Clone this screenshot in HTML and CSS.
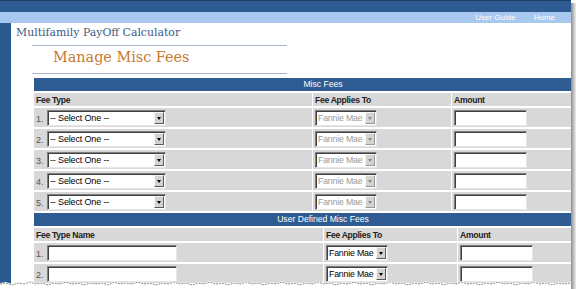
FILE: index.html
```html
<!DOCTYPE html>
<html>
<head>
<meta charset="utf-8">
<link rel="stylesheet" href="styles.css">
</head>
<body>
<div class="frame">
  <div class="page">
    <div class="topbar"></div>
    <div class="navbar"><a class="nav">User Guide</a><a class="nav">Home</a></div>
    <div class="main">
      <div class="sidebar"></div>
      <div class="content">
        <div class="apptitle">Multifamily PayOff Calculator</div>
        <div class="pagehead"><h1>Manage Misc Fees</h1></div>

        <div class="sect s1">
          <div class="bar">Misc Fees</div>
          <div class="cell hd">Fee Type</div><div class="cell hd">Fee Applies To</div><div class="cell hd">Amount</div>

          <div class="cell"><span class="num">1.</span><span class="selbox wide"><select><option>-- Select One --</option></select><span class="arr"></span></span></div>
          <div class="cell"><span class="selbox fm dis"><select disabled><option>Fannie Mae</option></select><span class="arr"></span></span></div>
          <div class="cell"><input class="amt" type="text"></div>

          <div class="cell"><span class="num">2.</span><span class="selbox wide"><select><option>-- Select One --</option></select><span class="arr"></span></span></div>
          <div class="cell"><span class="selbox fm dis"><select disabled><option>Fannie Mae</option></select><span class="arr"></span></span></div>
          <div class="cell"><input class="amt" type="text"></div>

          <div class="cell"><span class="num">3.</span><span class="selbox wide"><select><option>-- Select One --</option></select><span class="arr"></span></span></div>
          <div class="cell"><span class="selbox fm dis"><select disabled><option>Fannie Mae</option></select><span class="arr"></span></span></div>
          <div class="cell"><input class="amt" type="text"></div>

          <div class="cell"><span class="num">4.</span><span class="selbox wide"><select><option>-- Select One --</option></select><span class="arr"></span></span></div>
          <div class="cell"><span class="selbox fm dis"><select disabled><option>Fannie Mae</option></select><span class="arr"></span></span></div>
          <div class="cell"><input class="amt" type="text"></div>

          <div class="cell"><span class="num">5.</span><span class="selbox wide"><select><option>-- Select One --</option></select><span class="arr"></span></span></div>
          <div class="cell"><span class="selbox fm dis"><select disabled><option>Fannie Mae</option></select><span class="arr"></span></span></div>
          <div class="cell"><input class="amt" type="text"></div>
        </div>

        <div class="sect s2">
          <div class="bar">User Defined Misc Fees</div>
          <div class="cell hd">Fee Type Name</div><div class="cell hd">Fee Applies To</div><div class="cell hd">Amount</div>

          <div class="cell"><span class="num">1.</span><input class="name" type="text"></div>
          <div class="cell"><span class="selbox fm"><select><option>Fannie Mae</option></select><span class="arr"></span></span></div>
          <div class="cell"><input class="amt" type="text"></div>

          <div class="cell"><span class="num">2.</span><input class="name" type="text"></div>
          <div class="cell"><span class="selbox fm"><select><option>Fannie Mae</option></select><span class="arr"></span></span></div>
          <div class="cell"><input class="amt" type="text"></div>
        </div>
      </div>
    </div>
    <svg class="torn" width="571" height="8" viewBox="0 0 571 8" preserveAspectRatio="none">
      <polygon fill="#ffffff" points="0,2 6,1 12,3 18,1 24,2 30,0 36,2 42,1 48,3 54,1 60,2 66,0 72,2 78,1 84,3 90,1 96,2 102,1 108,3 114,0 120,2 126,1 132,2 138,0 144,2 150,1 156,3 162,1 168,2 174,0 180,2 186,1 192,3 198,1 204,2 210,0 216,2 222,1 228,3 234,1 240,2 246,0 252,2 258,1 264,3 270,1 276,2 282,0 288,2 294,1 300,3 306,1 312,2 318,0 324,2 330,1 336,3 342,1 348,2 354,0 360,2 366,1 372,3 378,1 384,2 390,0 396,2 402,1 408,3 414,1 420,2 426,0 432,2 438,1 444,3 450,1 456,2 462,0 468,2 474,1 480,3 486,1 492,2 498,0 504,2 510,1 516,3 522,1 528,2 534,0 540,2 546,1 552,3 558,1 564,2 571,1 571,8 0,8"/>
      <polyline fill="none" stroke="#8a8a8a" stroke-width="1" stroke-dasharray="2 1" points="0,3 6,2 12,4 18,2 24,3 30,1 36,3 42,2 48,4 54,2 60,3 66,1 72,3 78,2 84,4 90,2 96,3 102,2 108,4 114,1 120,3 126,2 132,3 138,1 144,3 150,2 156,4 162,2 168,3 174,1 180,3 186,2 192,4 198,2 204,3 210,1 216,3 222,2 228,4 234,2 240,3 246,1 252,3 258,2 264,4 270,2 276,3 282,1 288,3 294,2 300,4 306,2 312,3 318,1 324,3 330,2 336,4 342,2 348,3 354,1 360,3 366,2 372,4 378,2 384,3 390,1 396,3 402,2 408,4 414,2 420,3 426,1 432,3 438,2 444,4 450,2 456,3 462,1 468,3 474,2 480,4 486,2 492,3 498,1 504,3 510,2 516,4 522,2 528,3 534,1 540,3 546,2 552,4 558,2 564,3 571,2"/>
    </svg>
  </div>
  <div class="shadow"></div>
</div>
</body>
</html>
```

FILE: styles.css
```css
html, body {
  margin: 0;
  padding: 0;
  background: #ffffff;
}
.frame {
  width: 576px;
  height: 289px;
  overflow: hidden;
  display: flex;
}
.page {
  position: relative;
  width: 571px;
  height: 289px;
  overflow: hidden;
  background: #ffffff;
  display: flex;
  flex-direction: column;
}
.shadow {
  width: 5px;
  margin-top: 3px;
  background: linear-gradient(to right, #8c8c8c, #c8c8c8 60%, #ececec);
}
.topbar {
  height: 12px;
  flex: none;
  background: #2e5c92;
  border-top: 1px solid #1f3f68;
  box-sizing: border-box;
}
.navbar {
  height: 11px;
  flex: none;
  background: #a9c8f0;
  display: flex;
  justify-content: flex-end;
  align-items: center;
  gap: 18px;
  padding-right: 16px;
}
.nav {
  font-family: "Liberation Sans", Arial, sans-serif;
  font-size: 8px;
  color: #ffffff;
}
.main {
  flex: 1;
  display: flex;
}
.sidebar {
  width: 11px;
  flex: none;
  background: #2b5a90;
}
.content {
  flex: 1;
  padding-left: 5px;
  padding-top: 1px;
}
.apptitle {
  font-family: "DejaVu Serif", Georgia, serif;
  font-size: 10.9px;
  color: #3a5a84;
  height: 17px;
  line-height: 17px;
}
.pagehead {
  margin-left: 16px;
  width: 255px;
  border-top: 1px solid #a8b4c8;
  border-bottom: 1px solid #a8b4c8;
  margin-top: 4px;
  height: 29px;
  box-sizing: border-box;
  padding-bottom: 5px;
  display: flex;
  align-items: center;
}
.pagehead h1 {
  margin: 0 0 0 21px;
  font-family: "DejaVu Serif", Georgia, serif;
  font-weight: normal;
  font-size: 14.4px;
  color: #c77a33;
}
.sect {
  margin-left: 18px;
  width: 578px;
  display: grid;
  column-gap: 1px;
  row-gap: 2px;
  background: #ffffff;
}
.s1 {
  margin-top: 4px;
  grid-template-columns: 278px 138px 1fr;
}
.s2 {
  margin-top: 2px;
  grid-template-columns: 289px 133px 1fr;
}
.bar {
  grid-column: 1 / -1;
  height: 13px;
  background: #2e5c92;
  color: #ffffff;
  font-family: "Liberation Sans", Arial, sans-serif;
  font-size: 8.6px;
  line-height: 13px;
  text-align: center;
}
.cell {
  background: #d8d8d8;
  height: 19px;
  display: flex;
  align-items: center;
  padding-left: 2px;
  font-family: "Liberation Sans", Arial, sans-serif;
}
.cell.hd {
  height: 13px;
  font-size: 8.6px;
  letter-spacing: -0.3px;
  font-weight: bold;
  color: #222222;
}
.num {
  font-size: 9px;
  color: #555555;
  width: 11px;
  padding-top: 3px;
}
.selbox {
  display: inline-flex;
  height: 16px;
  box-sizing: border-box;
  background: #ffffff;
  border: 1px solid;
  border-color: #7f7f7f #e6e6e6 #e6e6e6 #7f7f7f;
  box-shadow: inset 1px 1px 0 #404040;
  padding: 1px 1px 1px 2px;
}
.selbox.wide { width: 119px; }
.selbox.fm { width: 62px; }
.selbox select {
  -webkit-appearance: none;
  appearance: none;
  border: none;
  outline: none;
  background: transparent;
  flex: 1;
  min-width: 0;
  padding: 0;
  margin: 0;
  font-family: "Liberation Sans", Arial, sans-serif;
  font-size: 9px;
  letter-spacing: -0.15px;
  color: #000000;
  height: 12px;
  line-height: 12px;
  opacity: 1;
}
.selbox.fm select {
  font-size: 8.8px;
  letter-spacing: -0.2px;
}
.selbox.dis select { color: #9a9a9a; }
.arr {
  width: 10px;
  flex: none;
  box-sizing: border-box;
  background: #d6d3ce;
  border: 1px solid;
  border-color: #f4f4f4 #5a5a5a #5a5a5a #f4f4f4;
  position: relative;
}
.arr::after {
  content: "";
  position: absolute;
  left: 1.5px;
  top: 4px;
  border-left: 2.5px solid transparent;
  border-right: 2.5px solid transparent;
  border-top: 3px solid #000000;
}
.dis .arr::after { border-top-color: #8a8a8a; }
.dis .arr { border-color: #f4f4f4 #9a9a9a #9a9a9a #f4f4f4; }
input {
  box-sizing: border-box;
  height: 16px;
  background: #ffffff;
  border: 1px solid;
  border-color: #7f7f7f #e6e6e6 #e6e6e6 #7f7f7f;
  box-shadow: inset 1px 1px 0 #404040;
  padding: 0 2px;
  margin: 0;
  outline: none;
}
input.amt { width: 73px; }
input.name { width: 130px; }
.torn {
  position: absolute;
  left: 0;
  bottom: 0;
  display: block;
}
```
